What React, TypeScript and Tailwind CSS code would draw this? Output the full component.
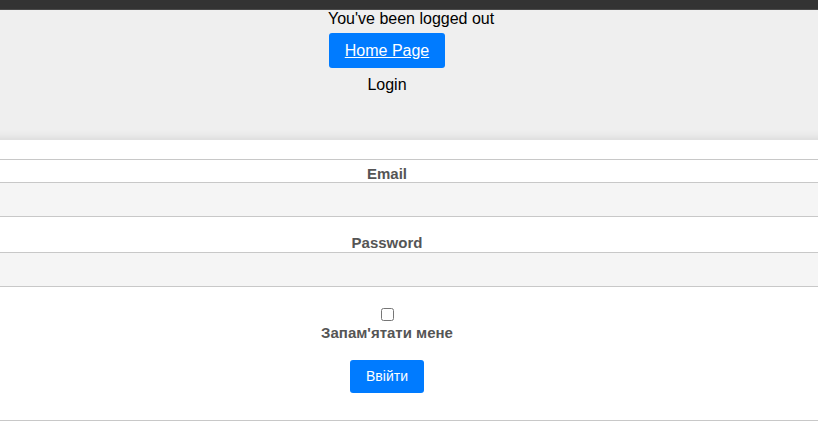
export default function App() {
  return (
    <div className="min-h-[444px] bg-white font-['Liberation_Sans',Arial,sans-serif] text-black">
      {/* top bar */}
      <div className="h-[10px] border-b border-[#4a4a4a] bg-[#333]" />

      {/* logout banner */}
      <div className="h-[130px] bg-[#efefef] pr-[44px] shadow-[inset_0_-12px_10px_-10px_rgba(0,0,0,0.1)]">
        <div className="mx-auto w-[116px]">
          <p className="-ml-[1px] whitespace-nowrap text-[16px] leading-[18px]">You've been logged out</p>
          <a
            href="#"
            className="mt-[5px] flex h-[35px] items-center justify-center rounded-[3px] bg-[#007bff] text-[16px] text-white underline"
          >
            Home Page
          </a>
          <p className="mt-[8px] text-center text-[16px] leading-[18px]">Login</p>
        </div>
      </div>

      {/* login form */}
      <form className="mt-[19px] border-t border-[#c8c8c8] text-center">
        <label className="block pr-[44px] pt-[6px] text-[15px] font-bold leading-[16px] text-[#555]">
          Email
        </label>
        <input type="email" className="block h-[35px] w-full border-y border-[#c8c8c8] bg-[#f5f5f5] outline-none" />

        <label className="block pb-[1px] pr-[44px] pt-[18px] text-[15px] font-bold leading-[16px] text-[#555]">
          Password
        </label>
        <input type="password" className="block h-[35px] w-full border-y border-[#c8c8c8] bg-[#f5f5f5] outline-none" />

        <div className="flex flex-col items-center pr-[44px]">
          <input type="checkbox" className="mt-[21px] h-[13px] w-[13px]" />
          <label className="mt-[4px] text-[15px] font-bold leading-[16px] text-[#555]">Запам'ятати мене</label>
          <button
            type="button"
            className="mt-[19px] h-[33px] w-[74px] rounded-[3px] bg-[#007bff] text-[14px] text-white"
          >
            Ввійти
          </button>
        </div>
        <div className="mt-[27px] border-t border-[#c8c8c8]" />
      </form>
    </div>
  );
}
